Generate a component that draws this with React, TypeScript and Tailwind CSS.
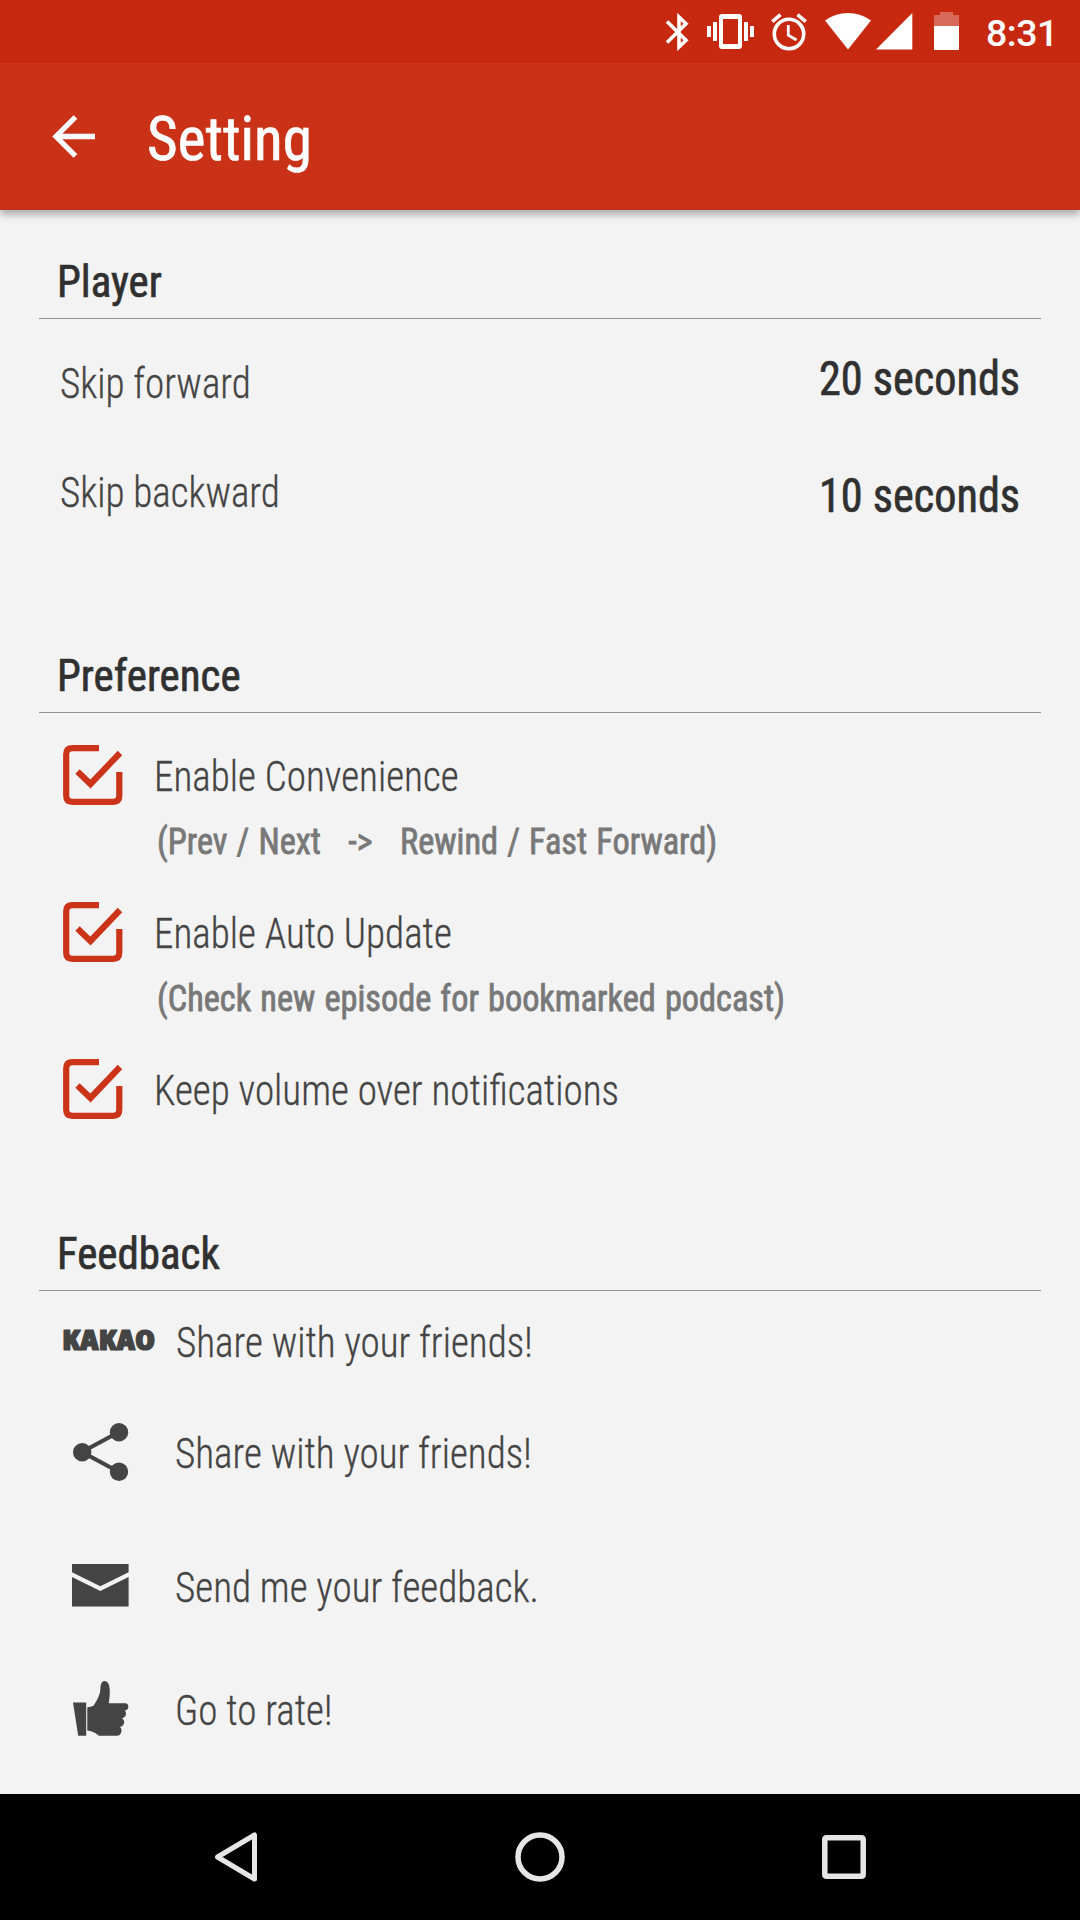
import type { ReactNode } from 'react'

const preferences = [
  { id: 'convenience', label: 'Enable Convenience', note: '(Prev / Next   ->   Rewind / Fast Forward)' },
  { id: 'update', label: 'Enable Auto Update', note: '(Check new episode for bookmarked podcast)' },
  { id: 'volume', label: 'Keep volume over notifications', note: '' },
]

// Light row text, set a little narrower than the condensed face
const labelText =
  'inline-block origin-left scale-x-[0.92] text-[42.5px] font-light whitespace-nowrap [-webkit-text-stroke:0.3px_currentColor]'

const valueText =
  'inline-block origin-right scale-x-[0.922] text-[48px] leading-[56px] whitespace-nowrap text-[#303030] [-webkit-text-stroke:0.7px_currentColor]'

function StatusBar() {
  return (
    <div className="flex h-[63px] items-start bg-[#c72810] text-white">
      <svg className="ml-[665px] mt-[13px] h-[38px] w-[24px]" viewBox="0 0 24 38" fill="none" stroke="currentColor" strokeWidth="3.6">
        <path d="M2 8.5L21 27.3L14 34V4L21 10.7L2 29.5" />
      </svg>
      <svg className="ml-[18px] mt-[14px] h-[36px] w-[47px]" viewBox="0 0 47 36" fill="currentColor">
        <path fillRule="evenodd" d="M15 0H32Q35 0 35 3V32Q35 35 32 35H15Q12 35 12 32V3Q12 0 15 0ZM16 5V30H31V5Z" />
        <path d="M0 12H4V23H0ZM6 8H10V27H6ZM37 8H41V27H37ZM43 12H47V23H43Z" />
      </svg>
      <svg className="ml-[17px] mt-[13px] h-[38px] w-[36px]" viewBox="0 0 36 38" fill="none" stroke="currentColor">
        <circle cx="18" cy="21" r="14.7" strokeWidth="3.6" />
        <path d="M1.3 8.6L9.5 1.7M34.7 8.6L26.5 1.7" strokeWidth="3.6" />
        <path d="M17.3 12V22.3L25.5 27" strokeWidth="2.8" />
      </svg>
      <svg className="ml-[18px] mt-[13px] h-[37px] w-[46px]" viewBox="0 0 46 37" fill="currentColor">
        <path d="M0 7.5Q10 0 23 0T46 7.5L23 36.5Z" />
      </svg>
      <svg className="ml-[5px] mt-[13px] h-[37px] w-[37px]" viewBox="0 0 37 37" fill="currentColor">
        <path d="M0 36.5L36.3 0V36.5Z" />
      </svg>
      <svg className="ml-[21px] mt-[12px] h-[38px] w-[25px]" viewBox="0 0 25 38" fill="currentColor">
        <path d="M0 3H6V0H19V3H25V14H0Z" opacity=".3" />
        <path d="M0 14H25V38H0Z" />
      </svg>
      <span className="ml-[27px] mt-[11px] font-['Roboto'] text-[37.5px] leading-[44px] font-medium tracking-[-0.5px] font-stretch-normal">8:31</span>
    </div>
  )
}

function SectionTitle({ children }: { children: ReactNode }) {
  return (
    <h2 className="mx-[39px] h-[74px] border-b border-[#929292] pl-[18px] text-[45px] leading-[73px] text-[#303030]">
      <span className="inline-block origin-left scale-x-[0.955] [-webkit-text-stroke:0.7px_currentColor]">{children}</span>
    </h2>
  )
}

function CheckIcon() {
  return (
    <svg className="h-[60px] w-[60px] shrink-0" viewBox="0 0 60 60" fill="none" stroke="#cb3419" strokeWidth="6.2">
      <path d="M36 3.2H9.5Q3.2 3.2 3.2 9.5V50.5Q3.2 56.8 9.5 56.8H50Q56.3 56.8 56.3 50.5V27" />
      <path d="M14.5 26.5L27.5 39L57 8" />
    </svg>
  )
}

function ShareIcon() {
  return (
    <svg className="h-[58px] w-[56px]" viewBox="0 0 56 58" fill="#444">
      <path d="M46 9L9 29L46 49" fill="none" stroke="#444" strokeWidth="4.2" />
      <circle cx="46" cy="9.3" r="9.2" />
      <circle cx="9.2" cy="29.2" r="9.2" />
      <circle cx="46" cy="48.8" r="9.2" />
    </svg>
  )
}

function MailIcon() {
  return (
    <svg className="-mt-px -ml-px h-[43px] w-[57px]" viewBox="0 0 57 43" fill="#444">
      <path d="M0 0H56.6V8.3L28.3 22.3L0 8.3Z" />
      <path d="M0 13L28.3 27L56.6 13V42.5H0Z" />
    </svg>
  )
}

function ThumbIcon() {
  return (
    <svg className="-mt-px h-[55px] w-[56px]" viewBox="0 0 56 55" fill="#444">
      <path d="M0 21.5H13.2V54.7H5.2Z" />
      <path d="M14.3 26.3Q18 26 20.5 24.8Q27 15 27.3 9Q27.2 0 31.8 0Q36.5.5 36.8 9Q37 15 35.8 22.3H53Q55.5 23 55.4 26Q55 29 52 29.5Q54 33 52 35.5Q50.5 37 49 37.2Q52 39.5 51 42.5Q50 45.5 47 46Q49.5 48.5 48 52Q47 54.7 44.5 54.7H26Q20 50 14.3 49.5Z" />
    </svg>
  )
}

function FeedbackRow({ icon, label, className }: { icon: ReactNode; label: string; className: string }) {
  return (
    <div className={`flex items-start pl-[63px] ${className}`}>
      <div className="flex h-[56px] w-[112px] items-center pl-[10px]">{icon}</div>
      <span className={`leading-[60px] ${labelText}`}>{label}</span>
    </div>
  )
}

export default function App() {
  return (
    <div className="flex h-[1920px] w-[1080px] flex-col overflow-hidden bg-[#f3f3f3] font-['Roboto_Condensed','Roboto',sans-serif] font-stretch-condensed text-[#444]">
      <StatusBar />

      <header className="flex h-[147px] items-start bg-[#ca3217] text-white shadow-[0_5px_7px_rgba(0,0,0,0.28)]">
        <svg className="ml-[52px] mt-[52px] h-[43px] w-[44px]" viewBox="0 0 44 43" fill="none" stroke="currentColor" strokeWidth="5.3">
          <path d="M43 21.5H4M23.5 2L4 21.5L23.5 41" />
        </svg>
        <h1 className="ml-[51px] mt-[36px] origin-left scale-x-[0.97] text-[61px] leading-[80px] [-webkit-text-stroke:0.7px_currentColor]">Setting</h1>
      </header>

      <main className="h-[1584px]">
        {/* Player */}
        <section className="h-[394px] pt-[35px]">
          <SectionTitle>Player</SectionTitle>
          <div className="flex h-[149px] items-start justify-between pr-[60px] pl-[60px]">
            <span className={`mt-[40px] leading-[50px] ${labelText}`}>Skip forward</span>
            <span className={`mt-[32px] ${valueText}`}>20 seconds</span>
          </div>
          <div className="flex items-start justify-between pr-[60px] pl-[60px]">
            <span className={`leading-[50px] ${labelText}`}>Skip backward</span>
            <span className={valueText}>10 seconds</span>
          </div>
        </section>

        {/* Preference */}
        <section className="h-[578px] pt-[35px]">
          <SectionTitle>Preference</SectionTitle>
          <div className="pt-[32px]">
            {preferences.map(({ id, label, note }) => (
              <div key={id} className="flex h-[157px] items-start pl-[63px]">
                <CheckIcon />
                <div className="mt-px ml-[31px] flex flex-col items-start">
                  <span className={`leading-[62px] ${labelText}`}>{label}</span>
                  <span className="ml-[3px] origin-left scale-x-[0.953] text-[36px] leading-[68px] [word-spacing:1.3px] whitespace-pre text-[#787878] [-webkit-text-stroke:0.8px_currentColor]">
                    {note}
                  </span>
                </div>
              </div>
            ))}
          </div>
        </section>

        {/* Feedback */}
        <section className="pt-[35px]">
          <SectionTitle>Feedback</SectionTitle>
          <div className="flex h-[109px] items-start pt-[22px] pl-[63px]">
            <svg className="mt-[6px] h-[44px] w-[113px]" viewBox="0 0 113 44">
              <text
                x="-0.8"
                y="30.5"
                textLength="93"
                lengthAdjust="spacingAndGlyphs"
                className="fill-[#444] stroke-[#444] font-['Open_Sans'] text-[29px] font-extrabold"
                strokeWidth="1.2"
                strokeLinejoin="round"
              >
                KAKAO
              </text>
            </svg>
            <span className={`leading-[60px] ${labelText}`}>Share with your friends!</span>
          </div>
          <FeedbackRow icon={<ShareIcon />} label="Share with your friends!" className="mt-[24px] h-[134px]" />
          <FeedbackRow icon={<MailIcon />} label="Send me your feedback." className="h-[123px]" />
          <FeedbackRow icon={<ThumbIcon />} label="Go to rate!" className="" />
        </section>
      </main>

      <nav className="flex h-[126px] items-center justify-between bg-black pr-[214px] pl-[214px] text-[#e6e6e6]">
        <svg className="h-[50px] w-[44px]" viewBox="0 0 44 50" fill="none" stroke="currentColor" strokeWidth="5" strokeLinejoin="round">
          <path d="M40.5 3V47L3.5 25Z" />
        </svg>
        <svg className="h-[50px] w-[50px]" viewBox="0 0 50 50" fill="none" stroke="currentColor" strokeWidth="5.5">
          <circle cx="25" cy="25" r="22" />
        </svg>
        <svg className="h-[44px] w-[44px]" viewBox="0 0 44 44" fill="none" stroke="currentColor" strokeWidth="5.5">
          <rect x="2.8" y="2.8" width="38.4" height="38.4" rx="1.5" />
        </svg>
      </nav>
    </div>
  )
}
